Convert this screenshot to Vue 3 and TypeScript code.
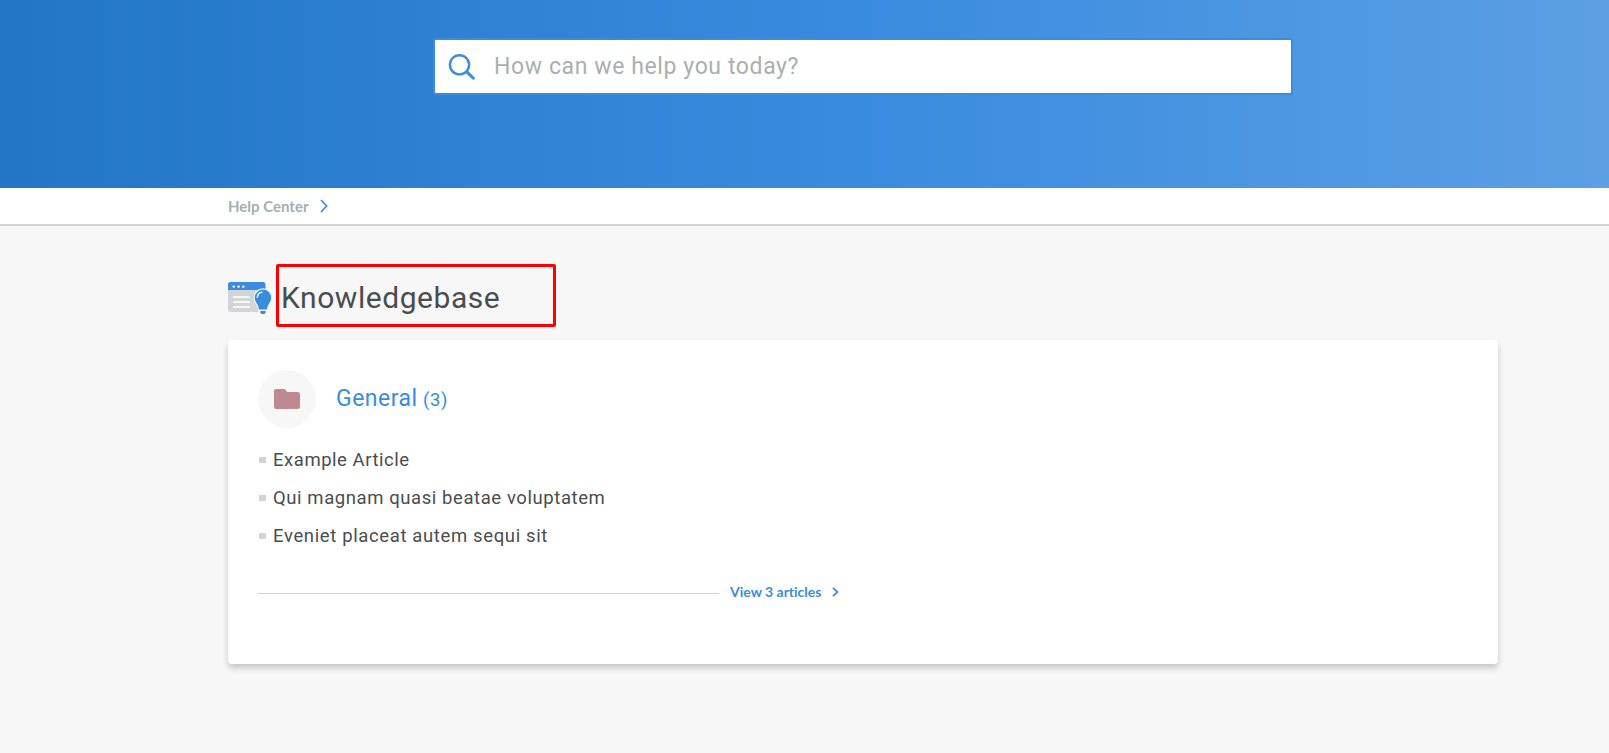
<script setup lang="ts">
interface Article {
  title: string
  fit: string
}

const articles: Article[] = [
  { title: 'Example Article', fit: 'fit-a' },
  { title: 'Qui magnam quasi beatae voluptatem', fit: 'fit-b' },
  { title: 'Eveniet placeat autem sequi sit', fit: 'fit-c' },
]
</script>

<template>
  <div class="page">
    <header class="hero">
      <div class="search">
        <svg class="search-icon" width="28" height="28" viewBox="0 0 28 28" fill="none" stroke="#3a8cde" stroke-width="2.4">
          <circle cx="11.5" cy="11.8" r="9.6" />
          <path d="M18.6 18.6L26.2 26" stroke-width="3" />
        </svg>
        <span class="placeholder">How can we help you today?</span>
      </div>
    </header>

    <nav class="crumbs">
      <span class="crumb">Help Center</span>
      <svg width="8" height="14" viewBox="0 0 8 14" fill="none" stroke="#3a8cde" stroke-width="1.7">
        <path d="M1 1L6.6 7L1 13" />
      </svg>
    </nav>

    <main class="content">
      <div class="heading">
        <svg class="kb-icon" width="44" height="33" viewBox="0 0 44 33">
          <path d="M0 8H37V27.5a2.5 2.5 0 0 1-2.5 2.5H2.5A2.5 2.5 0 0 1 0 27.5Z" fill="#d1d5d6" />
          <path d="M0 8V2.5A2.5 2.5 0 0 1 2.5 0H35a2.5 2.5 0 0 1 2.5 2.5V8Z" fill="#3a8cde" />
          <g fill="#fff"><circle cx="5.7" cy="4.6" r="1.2" /><circle cx="10.5" cy="4.6" r="1.2" /><circle cx="15.3" cy="4.6" r="1.2" /></g>
          <path d="M5.8 15H21M5.8 20H21M5.8 25H21" stroke="#f7f7f7" stroke-width="1.8" stroke-linecap="round" />
          <path d="M35 6.2a9.4 9.4 0 0 1 9.2 9.5c0 5-3.7 7.2-4.4 13V33h-9.4v-4.3c-.8-5.8-4.6-8-4.6-13A9.4 9.4 0 0 1 35 6.2Z" fill="#f7f7f7" />
          <path d="M35 7.5a8.2 8.2 0 0 1 8.2 8.2c0 4.6-3.6 6.2-4.2 11.8h-8C30.4 21.9 26.8 20.3 26.8 15.7a8.2 8.2 0 0 1 8.2-8.2Z" fill="#3a8cde" />
          <path d="M32.4 29h5.2v1.8l-1 1.2h-3.2l-1-1.2Z" fill="#3a8cde" />
          <path d="M29.3 15.3c.2-2.7 1.8-4.6 4.5-5.2" fill="none" stroke="#fff" stroke-width="1.4" stroke-linecap="round" />
        </svg>
        <h1 class="title">Knowledgebase</h1>
        <div class="marker"></div>
      </div>

      <section class="card">
        <div class="category">
          <div class="badge">
            <svg width="26" height="20" viewBox="0 0 26 20">
              <path d="M2.3 0H10.5L13.4 3H23.7A2.3 2.3 0 0 1 26 5.3V17.7A2.3 2.3 0 0 1 23.7 20H2.3A2.3 2.3 0 0 1 0 17.7V2.3A2.3 2.3 0 0 1 2.3 0Z" fill="#c08890" />
            </svg>
          </div>
          <span class="name">General</span>
          <span class="count">(3)</span>
        </div>
        <ul class="articles">
          <li v-for="a in articles" :key="a.title"><span :class="a.fit">{{ a.title }}</span></li>
        </ul>
        <div class="more">
          <span class="rule"></span>
          <span class="view">View 3 articles</span>
          <svg width="7" height="10" viewBox="0 0 7 10" fill="none" stroke="#3a8cde" stroke-width="1.8">
            <path d="M1 .8L5.5 5L1 9.2" />
          </svg>
        </div>
      </section>
    </main>
  </div>
</template>

<style>
body {
  margin: 0;
  background: #f7f7f7;
}
</style>

<style scoped>
.page {
  height: 753px;
  overflow: hidden;
  background: #f7f7f7;
  font-family: Roboto, sans-serif;
  color: #4a4d4f;
}
.hero {
  box-sizing: border-box;
  height: 188px;
  padding: 38px 0 0 433px;
  background: linear-gradient(90deg, #2276c5 0%, #398bdf 53%, #5c9fe4 100%);
}
.search {
  box-sizing: border-box;
  display: flex;
  align-items: center;
  width: 860px;
  height: 57px;
  padding-left: 13px;
  border: 2px solid #3a8cde;
  border-radius: 3px;
  background: #fff;
}
.search-icon {
  flex: none;
}
.placeholder {
  margin-left: 18px;
  font-size: 23px;
  line-height: 30px;
  letter-spacing: 0.6px;
  color: #a9b0b0;
  white-space: nowrap;
}
.crumbs {
  box-sizing: border-box;
  display: flex;
  align-items: center;
  height: 38px;
  padding-left: 228px;
  border-bottom: 2px solid #d1d5d5;
  background: #fff;
}
.crumb {
  width: 91.5px;
  font: bold 15px/20px Lato, sans-serif;
  color: #a4b0b1;
}
.content {
  width: 1270px;
  margin-left: 228px;
}
.heading {
  position: relative;
  display: flex;
  align-items: center;
  height: 63px;
  padding-top: 38px;
}
.kb-icon {
  flex: none;
  margin-top: 6px;
}
.title {
  margin: 4px 0 0 9px;
  font-size: 30px;
  line-height: 40px;
  font-weight: 400;
  letter-spacing: 0.55px;
}
.marker {
  position: absolute;
  left: 48px;
  top: 38px;
  box-sizing: border-box;
  width: 280px;
  height: 63px;
  border: 3px solid #f00;
  border-radius: 2px;
}
.card {
  box-sizing: border-box;
  height: 324px;
  margin-top: 13px;
  padding: 30px;
  border-radius: 4px;
  background: #fff;
  box-shadow: 0 4px 6px rgba(0, 0, 0, 0.2);
}
.category {
  display: flex;
  align-items: center;
  height: 58px;
  color: #3a8cde;
}
.badge {
  display: flex;
  align-items: center;
  justify-content: center;
  width: 58px;
  height: 58px;
  border-radius: 50%;
  background: #f7f7f7;
}
.name {
  width: 87px;
  margin: 0 0 1px 20px;
  font-size: 23px;
  letter-spacing: 0.5px;
}
.count {
  margin-top: 1px;
  font-size: 18.5px;
  letter-spacing: 0.6px;
}
.articles {
  margin: 13px 0 0;
  padding: 0;
  list-style: none;
  font-size: 18.5px;
}
.articles li {
  display: flex;
  align-items: center;
  height: 38px;
}
.fit-a {
  letter-spacing: 0.54px;
}
.fit-b {
  letter-spacing: 0.58px;
}
.fit-c {
  letter-spacing: 0.63px;
}
.articles li span {
  line-height: 22px;
}
.articles li::before {
  content: '';
  width: 7px;
  height: 6px;
  margin: 0 7px 0 1px;
  background: #d1d5d6;
}
.more {
  display: flex;
  align-items: center;
  height: 20px;
  margin-top: 27px;
}
.rule {
  width: 461px;
  height: 1px;
  margin-top: 2px;
  background: #d1d5d6;
}
.view {
  width: 102px;
  margin-left: 11px;
  font: bold 14px/20px Lato, sans-serif;
  font-variant-ligatures: none;
  color: #3a8cde;
}
</style>
